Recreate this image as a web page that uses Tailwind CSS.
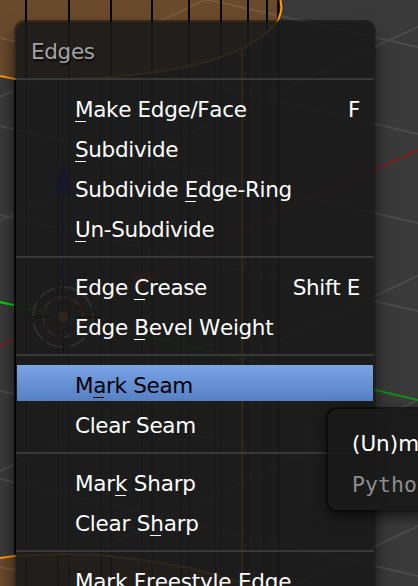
<!DOCTYPE html>
<html lang="en">
<head>
<meta charset="utf-8">
<title>Edges menu</title>
<script src="https://cdn.jsdelivr.net/npm/@tailwindcss/browser@4"></script>
</head>
<body class="relative w-[418px] h-[586px] overflow-hidden bg-[#3a3a3a] font-['DejaVu_Sans',sans-serif] text-[21.5px] tracking-[-0.33px] [font-kerning:none] text-white">
<!-- 3D viewport -->
<svg class="absolute inset-0" width="418" height="586" viewBox="0 0 418 586" fill="none">
  <g fill="#694a2b">
    <path d="M0 0H281V12L277 22L263 36L242 49L210 61L180 68L140 74L100 78L60 79H15L0 76Z"/>
    <path d="M0 558L14 556L60 554L100 555L150 561L190 568L240 582L252 586H0Z"/>
  </g>
  <path d="M0 38L250 94L418 134M0 97L215 -5M200 -2L418 47M0 221L418 27M0 126L418 223M0 215L418 311M0 471L418 276M0 391L418 486M0 479L418 576M0 567L100 590M280 592L418 526M0 596L418 400" stroke="#fff" stroke-opacity=".09" stroke-width="2"/>
  <path d="M0 346L200 250L418 150" stroke="#9a1414" stroke-width="1.500"/>
  <path d="M0 302L418 400" stroke="#119311" stroke-width="2"/>
  <path d="M0 302L15 305.500" stroke="#00d800" stroke-width="2"/>
  <path d="M26 0V79M69 0V79M111 0V76M152 0V71M189 0V66M221 0V57M248 0V44M267 0V31M15 78V555" stroke="#000" stroke-width="2"/>
  <path d="M26 78V586M58 79V586M69 79V586M101 79V586M111 77V586M142 74V586M152 72V586M181 68V586M189 66V586M215 60V586M221 57V586M248 44V586M264 36V586M267 32V586" stroke="#000" stroke-opacity=".65" stroke-width="2"/>
  <path d="M278.500 0V586" stroke="#000" stroke-opacity=".8" stroke-width="3"/>
  <path d="M280.500 0L281.500 8L280.500 13L278 21L263 36L242 49L210 61L180 68L140 74L100 78L60 79H15L0 76M0 558L14 556L60 554L100 555L150 561L190 568L240 582L252 586M242 49V586" stroke="#ff9d08" stroke-width="2"/>
  <path d="M63 160L54 193Q63 198 72 193ZM62 193h2V277h-2z" fill="#0808a8"/>
  <path d="M132 274L159 272L137 290Z" fill="#b51515"/>
  <circle cx="63" cy="317" r="30" stroke="#ddd" stroke-width="2" stroke-dasharray="18 5"/>
  <circle cx="63" cy="317" r="20" stroke="#d22" stroke-width="2" stroke-dasharray="8 8"/>
  <circle cx="63" cy="317" r="20" stroke="#bbb" stroke-width="2" stroke-dasharray="8 8" stroke-dashoffset="8"/>
  <path d="M23 317H50M76 317H103M63 277V304M63 330V357" stroke="#000" stroke-width="2"/>
  <circle cx="63" cy="317" r="5" fill="#e0a33a"/>
</svg>

<!-- popup menu -->
<div class="absolute left-[14px] top-[20px] w-[362px] h-[590px] rounded-t-[11px] border-2 border-black/45 bg-[#191919]/90 bg-clip-padding shadow-[0_12px_18px_rgba(0,0,0,0.6)] flex flex-col">
  <div class="h-[47px] pl-[15px] pt-[9px] leading-[42px] text-[#a3a3a3] [text-shadow:1px_2px_2px_rgba(0,0,0,0.8)]">Edges</div>
  <div class="h-[18px] pt-[9px]"><div class="h-[2px] bg-[#373737]"></div></div>
  <div class="leading-[46px] *:h-[40px] *:pl-[59px] *:pr-[14px] *:flex *:justify-between *:whitespace-pre">
    <div><span><u class="relative no-underline">M<i class="absolute left-0 bottom-0 w-[11px] h-px bg-white"></i></u>ake Edge/Face</span><span>F</span></div>
    <div><span><u class="relative no-underline">S<i class="absolute left-0 bottom-0 w-[11px] h-px bg-white"></i></u>ubdivide</span></div>
    <div><span>Subdivide <u class="relative no-underline">E<i class="absolute left-0 bottom-0 w-[11px] h-px bg-white"></i></u>dge-Ring</span></div>
    <div><span><u class="relative no-underline">U<i class="absolute left-0 bottom-0 w-[11px] h-px bg-white"></i></u>n-Subdivide</span></div>
  </div>
  <div class="h-[18px] pt-[9px]"><div class="h-[2px] bg-[#373737]"></div></div>
  <div class="leading-[46px] *:h-[40px] *:pl-[59px] *:pr-[14px] *:flex *:justify-between *:whitespace-pre">
    <div><span>Edge <u class="relative no-underline">C<i class="absolute left-0 bottom-0 w-[11px] h-px bg-white"></i></u>rease</span><span>Shift E</span></div>
    <div><span>Edge <u class="relative no-underline">B<i class="absolute left-0 bottom-0 w-[11px] h-px bg-white"></i></u>evel Weight</span></div>
  </div>
  <div class="h-[18px] pt-[9px]"><div class="h-[2px] bg-[#373737]"></div></div>
  <div class="h-[40px] px-px py-[2px]">
    <div class="h-[36px] pl-[58px] leading-[42px] text-black bg-linear-to-b from-[#7ba3e7] to-[#5680c4]">M<u class="relative no-underline">a<i class="absolute left-0 bottom-0 w-[11px] h-px bg-black"></i></u>rk Seam</div>
  </div>
  <div class="h-[40px] pl-[59px] leading-[46px]">Clear Seam</div>
  <div class="h-[18px] pt-[9px]"><div class="h-[2px] bg-[#373737]"></div></div>
  <div class="leading-[46px] *:h-[40px] *:pl-[59px] tracking-[-0.2px]">
    <div>Mar<u class="relative no-underline">k<i class="absolute left-0 bottom-0 w-[11px] h-px bg-white"></i></u> Sharp</div>
    <div>Clear S<u class="relative no-underline">h<i class="absolute left-0 bottom-0 w-[11px] h-px bg-white"></i></u>arp</div>
  </div>
  <div class="h-[18px] pt-[9px]"><div class="h-[2px] bg-[#373737]"></div></div>
  <div class="h-[40px] pl-[59px] leading-[46px] tracking-[-0.2px]">Mark Freestyle Edge</div>
</div>

<!-- tooltip -->
<div class="absolute left-[326px] top-[407px] w-[100px] h-[105px] rounded-l-[11px] border-2 border-black/60 bg-[#191919]/95 bg-clip-padding shadow-[0_5px_14px_rgba(0,0,0,0.6)] pl-[24px] pt-[14px] whitespace-nowrap">
  <div class="h-[41px] leading-[42px] tracking-normal">(Un)m</div>
  <div class="h-[40px] leading-[42px] text-[#8c8c8c] font-['DejaVu_Sans_Mono',monospace] tracking-[0.05px]">Pytho</div>
</div>
</body>
</html>
